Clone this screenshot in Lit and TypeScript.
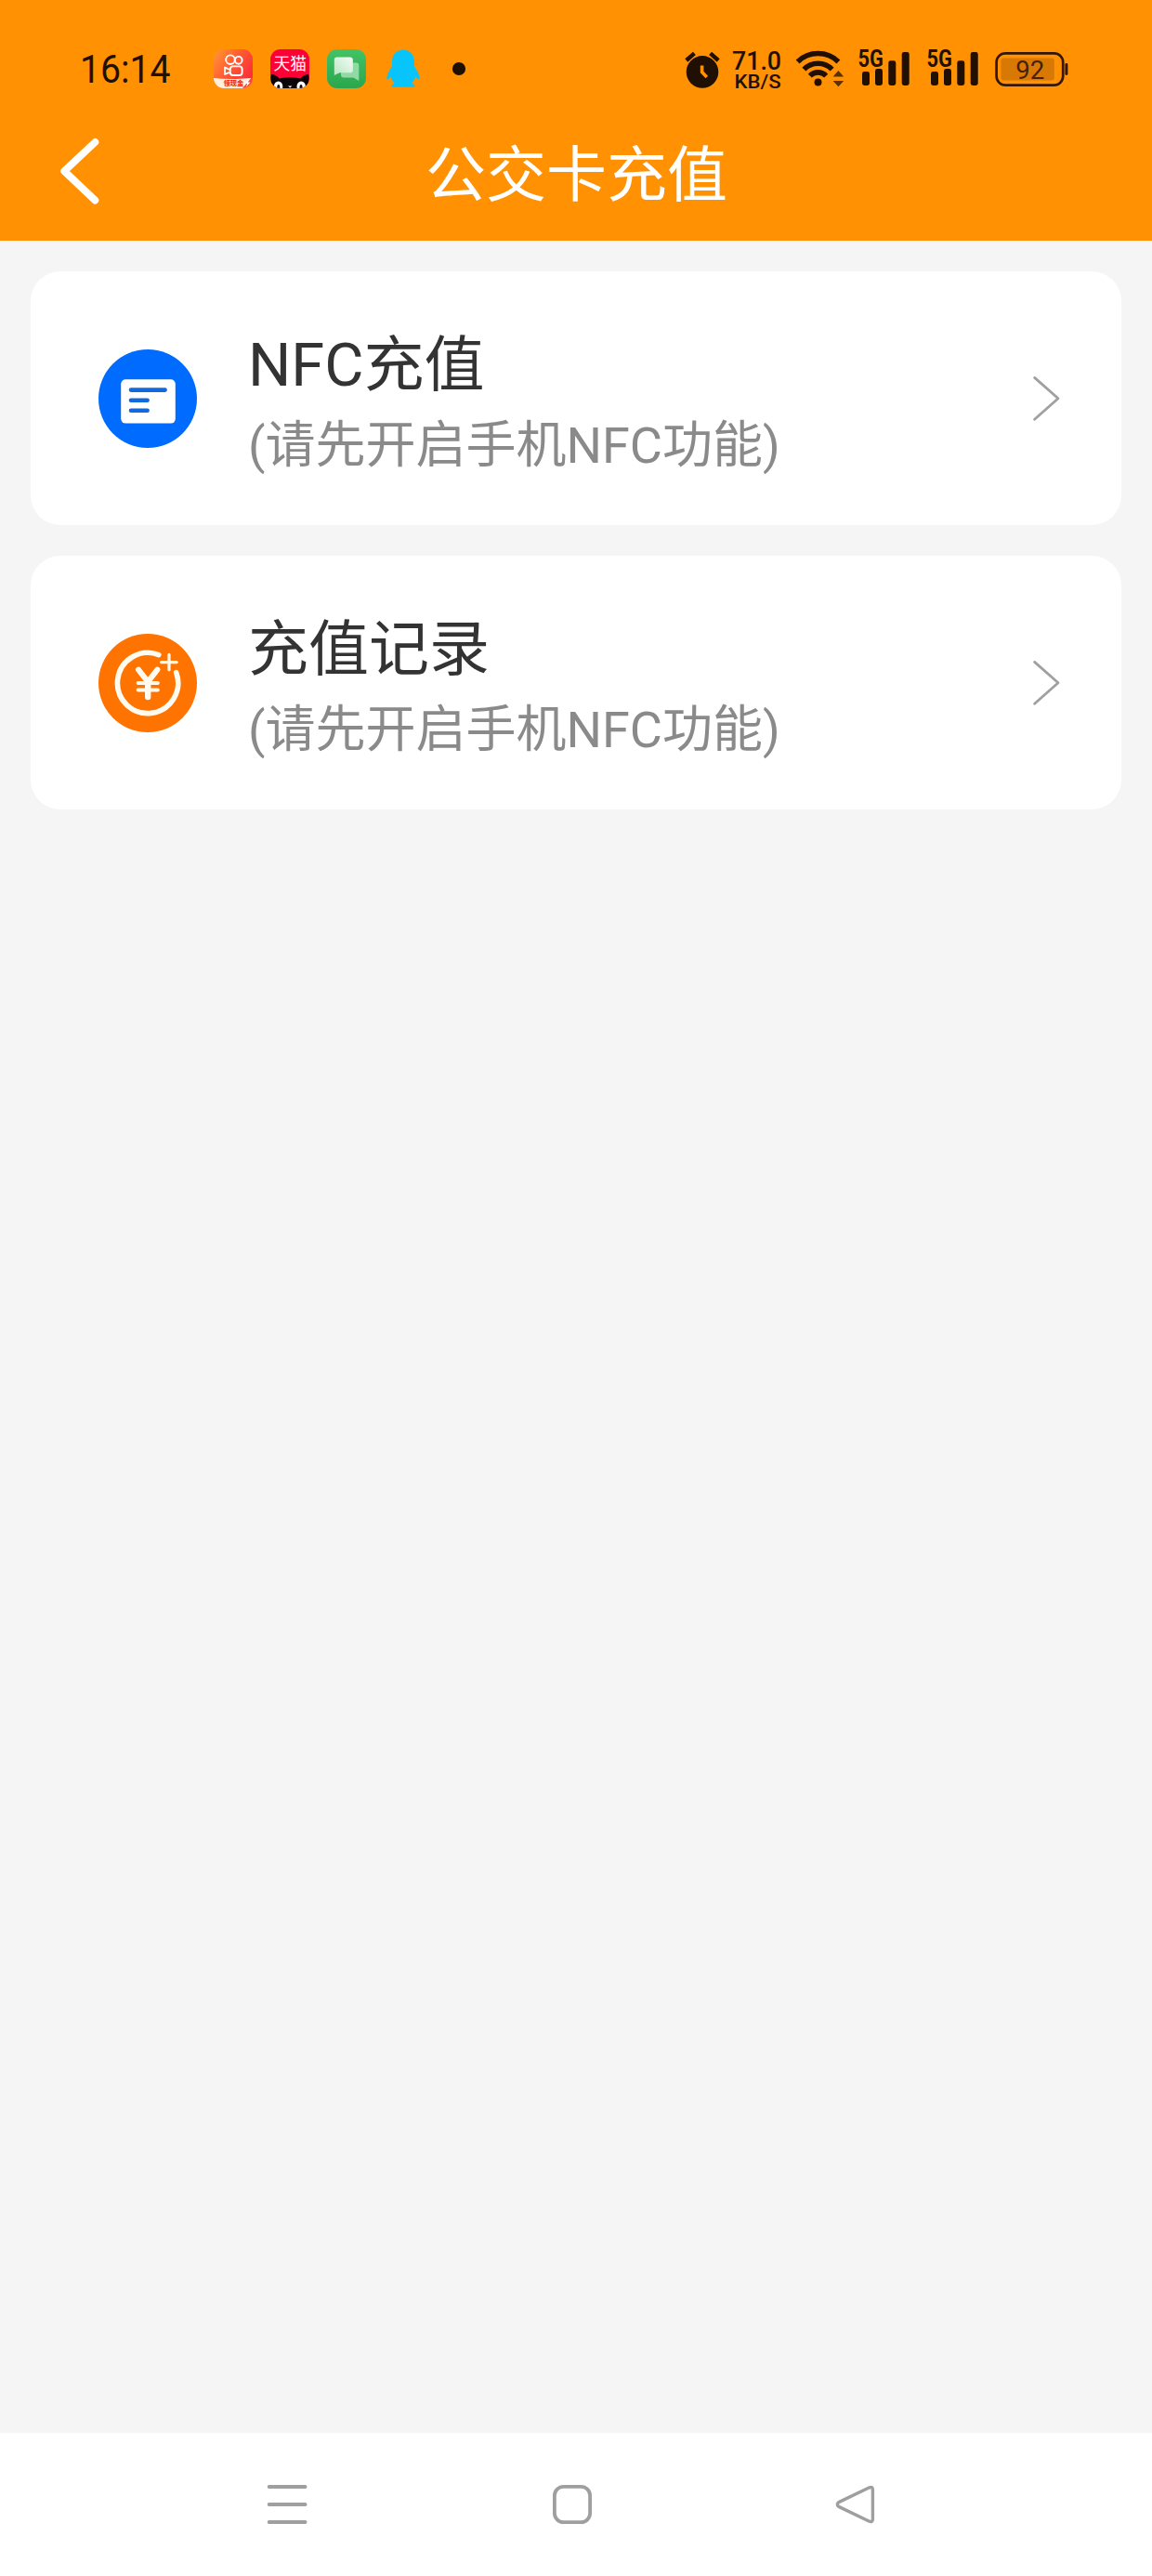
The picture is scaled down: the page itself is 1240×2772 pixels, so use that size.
import { LitElement, html, css, svg, type TemplateResult } from "lit";
import { customElement, property } from "lit/decorators.js";

const INK = "#201003";

@customElement("status-bar")
class StatusBar extends LitElement {
  static styles = css`
    :host {
      display: flex;
      align-items: center;
      height: 148px;
      padding: 0 90px 0 86px;
      box-sizing: border-box;
      font-family: Roboto, "Noto Sans", "Noto Sans CJK SC", sans-serif;
    }
    svg {
      display: block;
      flex: none;
      overflow: visible;
    }
    .apps,
    .system {
      display: flex;
      align-items: center;
    }
    .apps {
      gap: 19px;
      margin-left: 43.5px;
    }
    .system {
      margin-left: auto;
    }
    .speed {
      margin-left: 12px;
    }
    .wifi {
      margin-left: 14px;
    }
    .signal {
      margin-left: 13px;
    }
    .signal + .signal {
      margin-left: 16px;
    }
    .battery {
      margin-left: 16px;
    }
    .qq {
      margin-left: 3px;
    }
    .dot {
      margin-left: 13px;
    }
  `;

  private signal() {
    return html`<svg class="signal" width="58" height="44" viewBox="922 52 58 44" fill=${INK}>
      <text x="923.6" y="72.2" font-size="25.2" font-weight="700" textLength="27.4" lengthAdjust="spacingAndGlyphs">5G</text>
      <rect x="928" y="77" width="8" height="15" rx="2.4" />
      <rect x="942" y="74" width="8" height="18" rx="2.4" />
      <rect x="956.3" y="65.3" width="8" height="26.7" rx="2.4" />
      <rect x="970.7" y="56" width="8" height="36" rx="2.4" />
    </svg>`;
  }

  render() {
    return html`
      <svg width="100" height="44" viewBox="86 52 100 44">
        <text x="86" y="89.2" font-size="42" textLength="97.4" lengthAdjust="spacingAndGlyphs" fill=${INK}>16:14</text>
      </svg>
      <div class="apps">
        <svg width="42" height="42" viewBox="0 0 42 42">
          <defs>
            <linearGradient id="ks" x1="0" y1="0" x2="1" y2="0.7">
              <stop offset="0" stop-color="#ff9a35" />
              <stop offset="0.5" stop-color="#ff5a32" />
              <stop offset="1" stop-color="#fb2b3a" />
            </linearGradient>
            <clipPath id="tile"><rect width="42" height="42" rx="11" /></clipPath>
          </defs>
          <g clip-path="url(#tile)">
            <rect width="42" height="42" fill="url(#ks)" />
            <path d="M0 31Q16 33 42 31V42H0Z" fill="#fff0dc" />
            <path d="M42 29L31 42H42Z" fill="#fb4035" />
            <g fill="none" stroke="#fff" stroke-width="1.9">
              <circle cx="18" cy="11.2" r="4.8" />
              <circle cx="26.7" cy="11.8" r="3.9" />
              <rect x="17.8" y="18.4" width="12.8" height="9.6" rx="3" />
              <path d="M17.6 22L12 19.6V27L17.6 24.6" stroke-linejoin="round" />
            </g>
            <text x="10.6" y="39.4" font-size="7.2" font-weight="900" fill="#e63322">领现金</text>
            <path d="M37.5 32L33.4 37H36.2L34.6 41L39.4 35.6H36.6L38.6 32Z" fill="#fff" />
          </g>
        </svg>
        <svg width="42" height="42" viewBox="0 0 42 42">
          <clipPath id="tile2"><rect width="42" height="42" rx="11" /></clipPath>
          <g clip-path="url(#tile2)">
            <rect width="42" height="42" fill="#ff0036" />
            <text x="3.4" y="22.4" font-size="17.8" fill="#fff">天猫</text>
            <path d="M1 27Q6 27 9.5 31.5Q21 29 32.5 31.5Q36 27 41 27Q43 36 38 42H4Q-1 36 1 27Z" fill="#0b0508" />
            <ellipse cx="8.6" cy="40" rx="4.7" ry="5.6" fill="#fff" />
            <ellipse cx="33.2" cy="40" rx="4.7" ry="5.6" fill="#fff" />
            <ellipse cx="8.8" cy="41" rx="1.5" ry="3" fill="#0b0508" />
            <ellipse cx="33" cy="41" rx="1.5" ry="3" fill="#0b0508" />
            <path d="M19 39.4H23.4L21.2 41.4Z" fill="#fff" />
          </g>
        </svg>
        <svg width="42" height="42" viewBox="0 0 42 42">
          <defs>
            <linearGradient id="gr" x1="0" y1="0" x2="0" y2="1">
              <stop offset="0" stop-color="#43c266" />
              <stop offset="1" stop-color="#2ba64e" />
            </linearGradient>
            <linearGradient id="bub" x1="1" y1="0" x2="0" y2="1">
              <stop offset="0" stop-color="#f4fcf5" />
              <stop offset="1" stop-color="#b8e6c3" />
            </linearGradient>
          </defs>
          <rect width="42" height="42" rx="11" fill="url(#gr)" />
          <path d="M17 14.6H31.5Q34.3 14.6 34.3 17.4V34L28.5 30.4H18Q15 30.4 15 27.4V16.6Q15 14.6 17 14.6Z" fill="#93d9a5" />
          <path d="M10.6 8.6H24.8Q27.8 8.6 27.8 11.6V22.4Q27.8 25.2 24.8 25.2H13.6L7.8 28V11.4Q7.8 8.6 10.6 8.6Z" fill="url(#bub)" />
        </svg>
        <svg class="qq" width="36" height="42" viewBox="0 0 36 42">
          <path
            d="M18 0.8C10.6 0.8 6 6 6 13.4V18C4.4 21.4 0.4 26.4 0.4 31C0.4 33.6 2.2 33 4.8 29.6C5.4 32.4 6.8 34.8 9 36.6C6.8 37.6 5.4 38.6 5.4 40.8H30.6C30.6 38.6 29.2 37.6 27 36.6C29.2 34.8 30.6 32.4 31.2 29.6C33.8 33 35.6 33.6 35.6 31C35.6 26.4 31.6 21.4 30 18V13.4C30 6 25.4 0.8 18 0.8Z"
            fill="#07c5fb"
          />
        </svg>
        <svg class="dot" width="16" height="42" viewBox="0 0 16 42"><circle cx="10" cy="21" r="7.1" fill=${INK} /></svg>
      </div>
      <div class="system">
        <svg width="38" height="44" viewBox="737 52 38 44">
          <circle cx="756" cy="77.4" r="17.3" fill=${INK} />
          <path d="M738.8 65L747.4 57.4M773.2 65L764.6 57.4" stroke=${INK} stroke-width="4.4" fill="none" />
          <path d="M755.6 70.6V77.6L760.8 83" stroke="#ff9103" stroke-width="3.6" fill="none" />
        </svg>
        <svg class="speed" width="54" height="44" viewBox="787 52 54 44" fill=${INK} font-weight="500">
          <text x="788" y="75.3" font-size="28.5" textLength="53" lengthAdjust="spacingAndGlyphs">71.0</text>
          <text x="790.6" y="94.9" font-size="20.8" textLength="50" lengthAdjust="spacingAndGlyphs">KB/S</text>
        </svg>
        <svg class="wifi" width="54" height="44" viewBox="855 52 54 44">
          <g fill="none" stroke=${INK} stroke-width="5.6">
            <path d="M858.6 66.4A31.5 31.5 0 0 1 902.4 66.4" />
            <path d="M865.4 74.6A21 21 0 0 1 895.6 74.6" />
            <path d="M871.8 81.6A12 12 0 0 1 889.2 81.6" />
          </g>
          <circle cx="880.5" cy="88.6" r="4" fill=${INK} />
          <path d="M896.6 82.4L902.4 76L908.2 82.4ZM896.6 87L902.4 93.2L908.2 87Z" fill="#5a3003" />
        </svg>
        ${this.signal()}${this.signal()}
        <svg class="battery" width="80" height="44" viewBox="1070 52 80 44">
          <rect x="1072.6" y="57.3" width="71.6" height="34.4" rx="9.6" fill="none" stroke="#351602" stroke-width="2.7" />
          <rect x="1077.4" y="62.4" width="57.4" height="24" rx="3" fill="#d97905" />
          <rect x="1146.4" y="68" width="3" height="13" rx="1.4" fill="#351602" />
          <text x="1093.2" y="84.9" font-size="27.6" textLength="31" lengthAdjust="spacingAndGlyphs" fill="#47200a">92</text>
        </svg>
      </div>
    `;
  }
}

@customElement("title-bar")
class TitleBar extends LitElement {
  @property() heading = "";
  static styles = css`
    :host {
      display: grid;
      grid-template-columns: 140px 1fr 140px;
      align-items: start;
      height: 111px;
      color: #fff;
    }
    .back {
      display: block;
      margin-left: 62px;
    }
    .heading {
      text-align: center;
      font-family: Roboto, "Noto Sans CJK SC", sans-serif;
      font-size: 65px;
      line-height: 76px;
      white-space: nowrap;
      padding: 3px 0 0 1px;
    }
  `;
  render() {
    return html`
      <svg class="back" width="48" height="76" viewBox="62 148 48 76">
        <path d="M102.4 153L69.2 184.2L102.4 215.6" fill="none" stroke="#fff" stroke-width="7.8" stroke-linecap="round" stroke-linejoin="round" />
      </svg>
      <div class="heading">${this.heading}</div>
    `;
  }
}

const cardIcon: TemplateResult = html`<svg width="108" height="108" viewBox="-54 -54 108 108">
  <circle r="53" fill="#006cff" />
  <rect x="-28.8" y="-20.8" width="58.6" height="47.4" rx="5" fill="#fff" />
  <path d="M-18 -9.4H18.6M-18 1.8H-0.4M-18 12.8H-0.4" stroke="#1269dd" stroke-width="4.6" stroke-linecap="round" />
</svg>`;

const yuanIcon: TemplateResult = html`<svg width="108" height="108" viewBox="-54 -54 108 108">
  <circle r="53" fill="#ff7300" />
  <g fill="none" stroke="#fffaf0" stroke-linecap="round">
    <path d="M11.8 -30.4A32.6 32.6 0 1 0 30.6 -11.4" stroke-width="5.6" />
    <path d="M23 -30.6V-14.2M14.6 -22.4H31.2" stroke-width="3.2" />
    <path d="M-10 -14.4L0.2 -1.4L10.4 -14.4" stroke-width="6" />
    <path d="M0.2 -1V15" stroke-width="6.4" />
    <path d="M-10.4 0H10.8M-10.4 7.6H10.8" stroke-width="4" />
  </g>
</svg>`;

@customElement("menu-card")
class MenuCard extends LitElement {
  @property({ attribute: false }) icon?: TemplateResult;
  @property() heading = "";
  @property() hint = "";
  static styles = css`
    :host {
      display: flex;
      align-items: center;
      box-sizing: border-box;
      height: 273px;
      padding: 0 65px 0 72px;
      border-radius: 32px;
      background: #fff;
      font-family: Roboto, "Noto Sans CJK SC", sans-serif;
    }
    svg {
      display: block;
      flex: none;
    }
    .text {
      flex: 1;
      margin-left: 54px;
      padding-top: 9px;
      white-space: nowrap;
    }
    .heading {
      font-size: 65px;
      line-height: 92px;
      color: #333;
    }
    .hint {
      font-size: 54px;
      line-height: 81px;
      color: #8a8a8a;
    }
  `;
  render() {
    return html`
      ${this.icon}
      <div class="text">
        <div class="heading">${this.heading}</div>
        <div class="hint">${this.hint}</div>
      </div>
      <svg width="32" height="52" viewBox="0 0 32 52">
        <path d="M3.6 3.4L29 25.8L3.6 48.2" fill="none" stroke="#a0a0a0" stroke-width="2.8" stroke-linecap="round" stroke-linejoin="round" />
      </svg>
    `;
  }
}

@customElement("nav-bar")
class NavBar extends LitElement {
  static styles = css`
    :host {
      display: flex;
      align-items: center;
      gap: 260.5px;
      box-sizing: border-box;
      height: 154px;
      padding-left: 286px;
      background: #fff;
    }
    svg {
      display: block;
      fill: none;
      stroke: #9f9f9f;
      stroke-width: 3.8;
      stroke-linecap: round;
      stroke-linejoin: round;
    }
  `;
  private button(shape: unknown) {
    return html`<svg width="46" height="46" viewBox="0 0 46 46">${shape}</svg>`;
  }
  render() {
    return html`
      ${this.button(svg`<path d="M3.6 4H42.6M3.6 23H42.6M3.6 42H42.6" />`)}
      ${this.button(svg`<rect x="3.9" y="3.9" width="38.2" height="38.2" rx="9.6" />`)}
      ${this.button(
        svg`<path stroke-width="3.4" d="M36.8 4.8L3.8 20.6Q0.8 23 3.8 25.4L36.8 41.2Q40.4 42.4 40.4 39V7Q40.4 3.6 36.8 4.8Z" />`
      )}
    `;
  }
}

@customElement("app-root")
class AppRoot extends LitElement {
  static styles = css`
    :host {
      display: flex;
      flex-direction: column;
      width: 1240px;
      height: 2772px;
      background: #f5f5f5;
    }
    .top {
      background: #ff9103;
    }
    .list {
      flex: 1;
      display: flex;
      flex-direction: column;
      gap: 33px;
      padding: 33px;
    }
  `;
  render() {
    return html`
      <div class="top">
        <status-bar></status-bar>
        <title-bar heading="公交卡充值"></title-bar>
      </div>
      <div class="list">
        <menu-card .icon=${cardIcon} heading="NFC充值" hint="(请先开启手机NFC功能)"></menu-card>
        <menu-card .icon=${yuanIcon} heading="充值记录" hint="(请先开启手机NFC功能)"></menu-card>
      </div>
      <nav-bar></nav-bar>
    `;
  }
}
